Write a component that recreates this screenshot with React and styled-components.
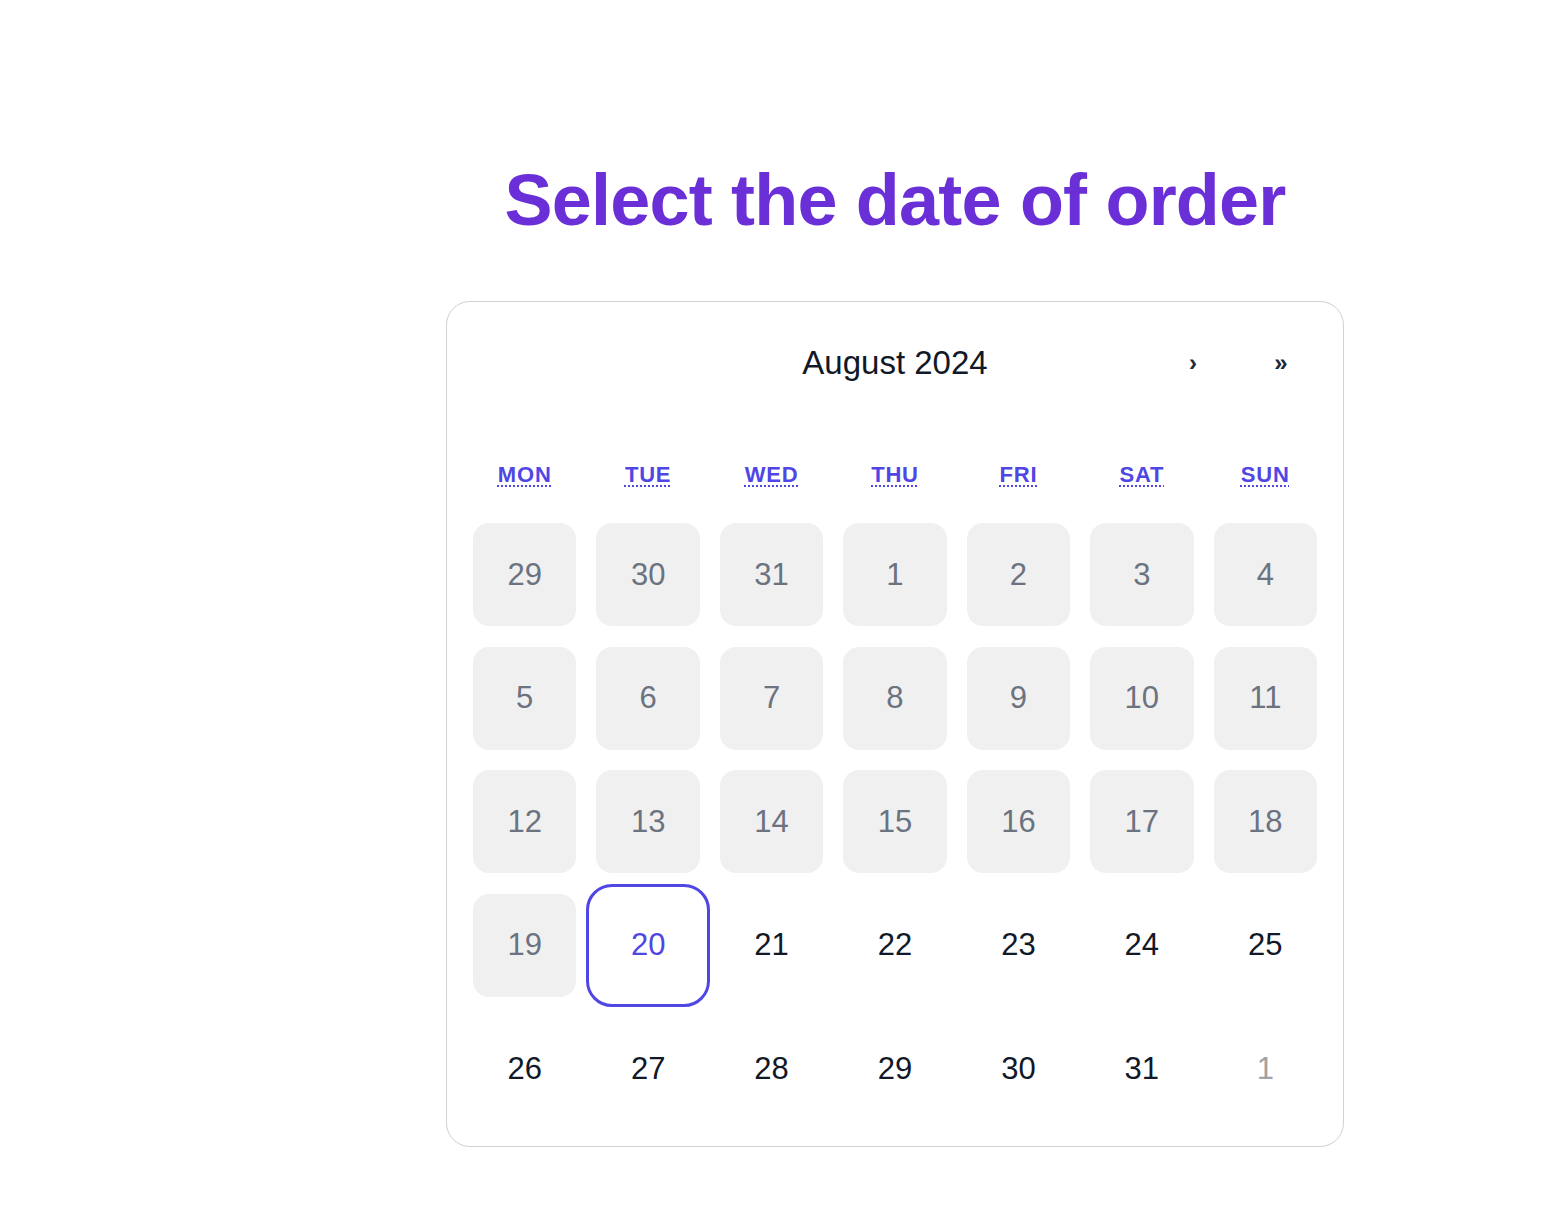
import styled, { createGlobalStyle } from 'styled-components'

const GlobalStyle = createGlobalStyle`
    html, body {
        margin: 0;
        padding: 0;
        background: #ffffff;
        font-family: "Liberation Sans", Arial, Helvetica, sans-serif;
        color: #111827;
    }
    * {
        box-sizing: border-box;
    }
`

const WEEKDAYS = [
    ['MON', 'Monday'],
    ['TUE', 'Tuesday'],
    ['WED', 'Wednesday'],
    ['THU', 'Thursday'],
    ['FRI', 'Friday'],
    ['SAT', 'Saturday'],
    ['SUN', 'Sunday'],
]

// Calendar grid for August 2024, weeks starting on Monday
const buildDays = () => {
    const days = []
    ;[29, 30, 31].forEach(n => days.push({ n, state: 'disabled' }))
    for (let n = 1; n <= 31; n++) {
        let state = 'active'
        if (n < 20) state = 'disabled'
        if (n === 20) state = 'selected'
        days.push({ n, state })
    }
    days.push({ n: 1, state: 'neighbor' })
    return days
}

function App() {
    const days = buildDays()

    return (
        <Page>
            <GlobalStyle />
            <Title>Select the date of order</Title>
            <CalendarCard>
                <Nav>
                    <NavButton $hidden aria-hidden="true">«</NavButton>
                    <NavButton $hidden aria-hidden="true">‹</NavButton>
                    <NavLabel>August 2024</NavLabel>
                    <NavButton>›</NavButton>
                    <NavButton>»</NavButton>
                </Nav>
                <WeekdayRow>
                    {WEEKDAYS.map(([short, full]) => (
                        <Weekday key={short}>
                            <abbr title={full}>{short}</abbr>
                        </Weekday>
                    ))}
                </WeekdayRow>
                <DayGrid>
                    {days.map((d, i) => (
                        <DayTile key={i} $state={d.state}>
                            {d.n}
                        </DayTile>
                    ))}
                </DayGrid>
            </CalendarCard>
        </Page>
    )
}

export default App

const Page = styled.main`
    min-height: 100vh;
    display: flex;
    flex-direction: column;
    align-items: center;
    padding: 164px 0 40px 234px;
`

const Title = styled.h1`
    margin: 0 0 65px;
    font-size: 72px;
    line-height: 1;
    font-weight: 700;
    letter-spacing: -0.8px;
    color: #6a2fd6;
`

const CalendarCard = styled.section`
    width: 898px;
    border: 1px solid #d1d1d6;
    border-radius: 24px;
    padding: 26px;
    background: #fff;
`

const Nav = styled.div`
    display: flex;
    align-items: center;
    height: 70px;
    gap: 16px;
`

const NavButton = styled.button`
    width: 72px;
    height: 70px;
    border: none;
    background: none;
    padding: 0;
    font-family: "Liberation Sans", Arial, sans-serif;
    font-size: 24px;
    font-weight: 700;
    color: #1f2937;
    cursor: pointer;
    visibility: ${props => (props.$hidden ? 'hidden' : 'visible')};
`

const NavLabel = styled.div`
    flex: 1;
    text-align: center;
    font-size: 33px;
    color: #111827;
`

const WeekdayRow = styled.div`
    display: grid;
    grid-template-columns: repeat(7, 1fr);
    column-gap: 20px;
    margin: 65px 0 36px;
`

const Weekday = styled.div`
    text-align: center;
    font-size: 22px;
    line-height: 24px;
    font-weight: 700;
    color: #4f46e5;

    abbr {
        text-decoration: underline dotted;
        text-decoration-thickness: 2px;
        text-underline-offset: 3px;
        letter-spacing: 0.8px;
        cursor: help;
    }
`

const tileColors = {
    disabled: { bg: '#f0f0f0', fg: '#6b7280' },
    selected: { bg: 'transparent', fg: '#4f46e5' },
    active: { bg: 'transparent', fg: '#111827' },
    neighbor: { bg: 'transparent', fg: '#a3a3a3' },
}

const DayGrid = styled.div`
    display: grid;
    grid-template-columns: repeat(7, 1fr);
    grid-auto-rows: 103px;
    column-gap: 20px;
    row-gap: 20.5px;
`

const DayTile = styled.button`
    display: flex;
    align-items: center;
    justify-content: center;
    border: none;
    border-radius: 16px;
    padding: 0;
    font-family: "Liberation Sans", Arial, sans-serif;
    font-size: 31px;
    background: ${props => tileColors[props.$state].bg};
    color: ${props => tileColors[props.$state].fg};
    cursor: ${props => (props.$state === 'disabled' ? 'default' : 'pointer')};
    outline: ${props => (props.$state === 'selected' ? '3px solid #4f46e5' : 'none')};
    outline-offset: 7px;
`
